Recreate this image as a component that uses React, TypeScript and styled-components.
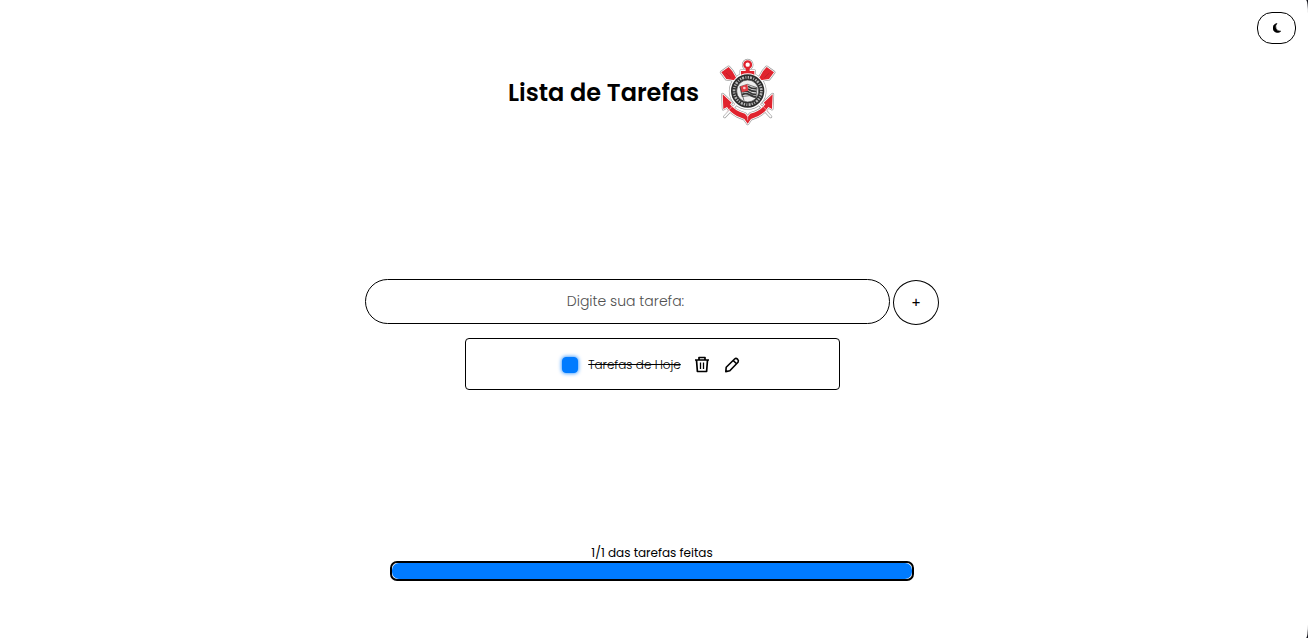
import React, { useState } from "react";
import styled, { createGlobalStyle } from "styled-components";

const GlobalStyle = createGlobalStyle`
  *, *::before, *::after { box-sizing: border-box; }
  html { background: #14141c; }
  body {
    margin: 0;
    color: #000;
    font-family: Poppins, Inter, sans-serif;
    font-size: 12px;
  }
  button, input { font: inherit; color: inherit; }
`;

const Page = styled.div`
  display: flex;
  flex-direction: column;
  align-items: center;
  min-height: 100vh;
  padding: 12px 4px 57px 0;
  background: #fff;
  border-radius: 0 2px 2px 0 / 0 14px 14px 0;
`;

const ThemeButton = styled.button`
  display: flex;
  align-items: center;
  justify-content: center;
  align-self: flex-end;
  width: 39px;
  height: 32px;
  margin-right: 8px;
  padding: 0;
  border: 1px solid #000;
  border-radius: 15px;
  background: #fff;
  cursor: pointer;
`;

const Header = styled.header`
  display: flex;
  align-items: center;
`;

const Title = styled.h1`
  margin: 0;
  padding-top: 2px;
  font-size: 24px;
  line-height: 36px;
  font-weight: 600;
`;

const LogoBox = styled.div`
  display: flex;
  align-items: center;
  justify-content: center;
  width: 97px;
  height: 96px;
`;

const Form = styled.form`
  display: flex;
  align-items: flex-start;
  justify-content: center;
  gap: 3px;
  width: 100%;
  height: 46px;
  margin-top: 139px;
`;

const TaskInput = styled.input`
  width: 525px;
  max-width: 80%;
  height: 45px;
  padding: 0 12px 0 8px;
  border: 1px solid #000;
  border-radius: 23px;
  background: #fff;
  font-size: 14px;
  font-weight: 300;
  text-align: center;
  &::placeholder { color: #505050; opacity: 1; }
`;

const AddButton = styled.button`
  align-self: flex-end;
  width: 46px;
  height: 45px;
  padding: 2px 0 0;
  border: 1px solid #000;
  border-radius: 50%;
  background: #fff;
  font-size: 14px;
  cursor: pointer;
`;

const List = styled.ul`
  flex: 1;
  width: 375px;
  max-width: 100%;
  margin: 13px 0 0;
  padding: 0;
  list-style: none;
`;

const Task = styled.li`
  display: flex;
  align-items: center;
  justify-content: center;
  height: 52px;
  padding-top: 1px;
  border: 1px solid #000;
  border-radius: 4px;
`;

const Check = styled.input`
  appearance: none;
  width: 16px;
  height: 16px;
  margin: 0 10px 0 0;
  border: 1px solid #007bff;
  border-radius: 4px;
  cursor: pointer;
  &:checked {
    background: #007bff;
    box-shadow: 0 0 4px #007bff;
  }
`;

const TaskLabel = styled.label<{ $done: boolean }>`
  margin-right: 13px;
  line-height: 20px;
  font-weight: 300;
  text-decoration: ${(p) => (p.$done ? "line-through" : "none")};
`;

const IconButton = styled.button`
  display: flex;
  width: 18px;
  height: 18px;
  padding: 0;
  border: 0;
  background: none;
  cursor: pointer;
  & + & { margin-left: 12px; }
`;

const Footer = styled.footer`
  display: flex;
  flex-direction: column;
  align-items: center;
  width: 524px;
  max-width: 100%;
`;

const Counter = styled.p`
  margin: 0;
  padding-top: 2px;
  line-height: 16px;
`;

const Track = styled.div`
  width: 100%;
  height: 20px;
  border: 2px solid #000;
  border-radius: 7px;
  overflow: hidden;
`;

const Fill = styled.div`
  height: 100%;
  border-radius: 7px;
  background: #007bff;
`;

const FLUKES =
  "M39 132 66 157 61 162Q76 183 106 190L114 200 122 190Q152 183 167 162L162 157 189 132 187 176 176 170Q166 186 146 197L124 206 114 220 104 206 82 197Q62 186 52 170L41 176z";
const OARS =
  "M35 66 57 50 68 63 80 84 76 90 50 86zM193 66 171 50 160 63 148 84 152 90 178 86z";
const HANDLES = "M45 199 82 160M183 199 146 160";

function Crest() {
  return (
    <svg width="57" height="70" viewBox="28 20 171 210" role="img" aria-label="Corinthians">
      <g stroke="#9c9c9c" strokeWidth="9" strokeLinejoin="round" strokeLinecap="round" fill="#9c9c9c">
        <path d={HANDLES} />
        <path d={OARS} />
        <path d={FLUKES} />
        <circle cx="114" cy="43" r="13" />
        <path d="M94 61H134V76H94z" />
        <circle cx="114" cy="122" r="52" />
      </g>
      <g stroke="#fff" strokeWidth="5" strokeLinejoin="round" strokeLinecap="round" fill="#fff">
        <path d={HANDLES} />
        <path d={OARS} />
        <path d={FLUKES} />
        <circle cx="114" cy="43" r="13" />
        <path d="M94 61H134V76H94z" />
        <circle cx="114" cy="122" r="52" />
      </g>
      <g fill="#e0232e">
        <path d={OARS} />
        <path d={FLUKES} />
        <path d="M108 53H120V62H134V75H94V62H108z" />
      </g>
      <circle cx="114" cy="43" r="10" fill="none" stroke="#e0232e" strokeWidth="7" />
      <path d="M49 68 64 82M179 68 164 82" stroke="#b51c27" strokeWidth="2" />
      <path d="M50 186 76 160M178 186 152 160M114 192V210" fill="none" stroke="#f3c6c8" strokeWidth="2" />
      <circle cx="114" cy="122" r="53" fill="#fff" />
      <circle cx="114" cy="122" r="50" fill="#2c2c2c" />
      <circle cx="114" cy="122" r="41" fill="none" stroke="#b5b5b5" strokeWidth="8" strokeDasharray="4 3 6 4 3 4" />
      <circle cx="114" cy="122" r="33" fill="#eee" stroke="#444" strokeWidth="2" />
      <path d="M91 109 113 102 142 112 139 143 119 136 97 139z" fill="#ddd" stroke="#444" strokeWidth="2" />
      <path d="M115 108Q127 116 141 115M115 116Q127 124 140 123M98 125Q108 119 119 126T139 132M97 133Q108 127 120 133T139 140" fill="none" stroke="#333" strokeWidth="5" />
      <path d="M91 109 113 102 116 121 95 126z" fill="#e33b43" />
      <circle cx="104" cy="113" r="4" fill="#f6c9cb" />
      <path d="M91 109 103 151" stroke="#333" strokeWidth="2" />
    </svg>
  );
}

function Trash() {
  return (
    <svg width="18" height="18" viewBox="0 0 18 18" fill="none" stroke="#000" strokeWidth="1.7" strokeLinejoin="round" aria-hidden="true">
      <path d="M1 4H15M5 4V1.5H11V4M2.5 4 3.4 15.5H12.6L13.5 4" />
      <path d="M6.5 6.5V13M9.5 6.5V13" strokeWidth="1.3" />
    </svg>
  );
}

function Pencil() {
  return (
    <svg width="18" height="18" viewBox="0 0 18 18" fill="none" stroke="#000" strokeWidth="1.6" strokeLinejoin="round" aria-hidden="true">
      <path d="M1.8 15.6 2.2 11.3 10.6 3Q12 1.8 13.5 3.1T14 6.3L5.8 14.8zM9.3 4.5 12.5 7.7" />
    </svg>
  );
}

export default function App() {
  const [done, setDone] = useState(true);
  const [text, setText] = useState("");
  const count = done ? 1 : 0;

  return (
    <>
      <GlobalStyle />
      <Page>
        <ThemeButton type="button" aria-label="Alternar tema">
          <svg width="8" height="10" viewBox="0 0 8 10" aria-hidden="true">
            <path d="M4 .4A4.6 4.6 0 1 0 7.8 8.2 4.6 4.6 0 0 1 4 .4z" stroke="#000" strokeWidth=".6" />
          </svg>
        </ThemeButton>
        <Header>
          <Title>Lista de Tarefas</Title>
          <LogoBox><Crest /></LogoBox>
        </Header>
        <Form onSubmit={(e) => e.preventDefault()}>
          <TaskInput
            aria-label="Tarefa"
            placeholder="Digite sua tarefa:"
            value={text}
            onChange={(e) => setText(e.target.value)}
          />
          <AddButton type="submit">+</AddButton>
        </Form>
        <List>
          <Task>
            <Check id="task-1" type="checkbox" checked={done} onChange={() => setDone(!done)} />
            <TaskLabel htmlFor="task-1" $done={done}>Tarefas de Hoje</TaskLabel>
            <IconButton type="button" aria-label="Excluir"><Trash /></IconButton>
            <IconButton type="button" aria-label="Editar"><Pencil /></IconButton>
          </Task>
        </List>
        <Footer>
          <Counter>{count}/1 das tarefas feitas</Counter>
          <Track role="progressbar" aria-label="Progresso" aria-valuenow={count} aria-valuemin={0} aria-valuemax={1}>
            <Fill style={{ width: `${count * 100}%` }} />
          </Track>
        </Footer>
      </Page>
    </>
  );
}
